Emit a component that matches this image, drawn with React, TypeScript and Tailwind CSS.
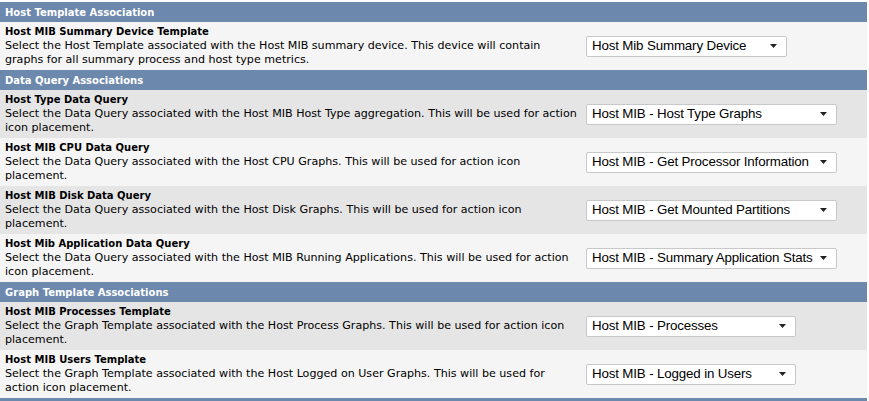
const sections = [
  {
    title: "Host Template Association",
    rows: [
      {
        name: "Host MIB Summary Device Template",
        desc: [
          "Select the Host Template associated with the Host MIB summary device. This device will contain",
          "graphs for all summary process and host type metrics.",
        ],
        value: "Host Mib Summary Device",
        width: "w-[201px]",
      },
    ],
  },
  {
    title: "Data Query Associations",
    rows: [
      {
        name: "Host Type Data Query",
        desc: [
          "Select the Data Query associated with the Host MIB Host Type aggregation. This will be used for action",
          "icon placement.",
        ],
        value: "Host MIB - Host Type Graphs",
        width: "w-[251px]",
      },
      {
        name: "Host MIB CPU Data Query",
        desc: [
          "Select the Data Query associated with the Host CPU Graphs. This will be used for action icon",
          "placement.",
        ],
        value: "Host MIB - Get Processor Information",
        width: "w-[251px]",
      },
      {
        name: "Host MIB Disk Data Query",
        desc: [
          "Select the Data Query associated with the Host Disk Graphs. This will be used for action icon",
          "placement.",
        ],
        value: "Host MIB - Get Mounted Partitions",
        width: "w-[251px]",
      },
      {
        name: "Host Mib Application Data Query",
        desc: [
          "Select the Data Query associated with the Host MIB Running Applications. This will be used for action",
          "icon placement.",
        ],
        value: "Host MIB - Summary Application Stats",
        width: "w-[251px]",
      },
    ],
  },
  {
    title: "Graph Template Associations",
    rows: [
      {
        name: "Host MIB Processes Template",
        desc: [
          "Select the Graph Template associated with the Host Process Graphs. This will be used for action icon",
          "placement.",
        ],
        value: "Host MIB - Processes",
        width: "w-[210px]",
      },
      {
        name: "Host MIB Users Template",
        desc: [
          "Select the Graph Template associated with the Host Logged on User Graphs. This will be used for",
          "action icon placement.",
        ],
        value: "Host MIB - Logged in Users",
        width: "w-[210px]",
      },
    ],
  },
];

const Select = ({ value, width }: { value: string; width: string }) => (
  <div
    className={`${width} h-[21px] flex items-center bg-white border border-[#c8c8c8] rounded-[2px] pl-[5px] pr-[9px] text-[13.33px] text-black font-['Liberation_Sans',Arial,sans-serif]`}
  >
    <span className="flex-1 min-w-0 whitespace-nowrap leading-none tracking-[-0.15px]">{value}</span>
    <svg width="7" height="4" viewBox="0 0 7 4" className="ml-[2px] shrink-0">
      <path d="M0 0h7L3.5 4z" fill="#222" />
    </svg>
  </div>
);

export default function App() {
  let n = 0;
  return (
    <div className="w-[869px] h-[401px] bg-white pt-[2px] pr-[2px] overflow-hidden font-['DejaVu_Sans',Verdana,sans-serif]">
      {sections.map((s) => (
        <div key={s.title}>
          <div className="h-[20px] bg-[#6d88ad] flex items-center pl-[5px] text-white font-bold text-[10px]">
            {s.title}
          </div>
          {s.rows.map((r) => {
            const alt = n++ % 2 === 1;
            return (
              <div
                key={r.name}
                className={`h-[48px] flex items-center ${alt ? "bg-[#e5e5e5]" : "bg-[#f5f5f5]"}`}
              >
                <div className="w-[586px] pl-[5px] text-[11.1px] leading-[14px] text-black self-start pt-[3px]">
                  <div className="font-bold text-[10px]">{r.name}</div>
                  {r.desc.map((l) => (
                    <div key={l} className="whitespace-nowrap">
                      {l}
                    </div>
                  ))}
                </div>
                <Select value={r.value} width={r.width} />
              </div>
            );
          })}
        </div>
      ))}
      <div className="h-[20px] bg-[#6d88ad]" />
    </div>
  );
}
